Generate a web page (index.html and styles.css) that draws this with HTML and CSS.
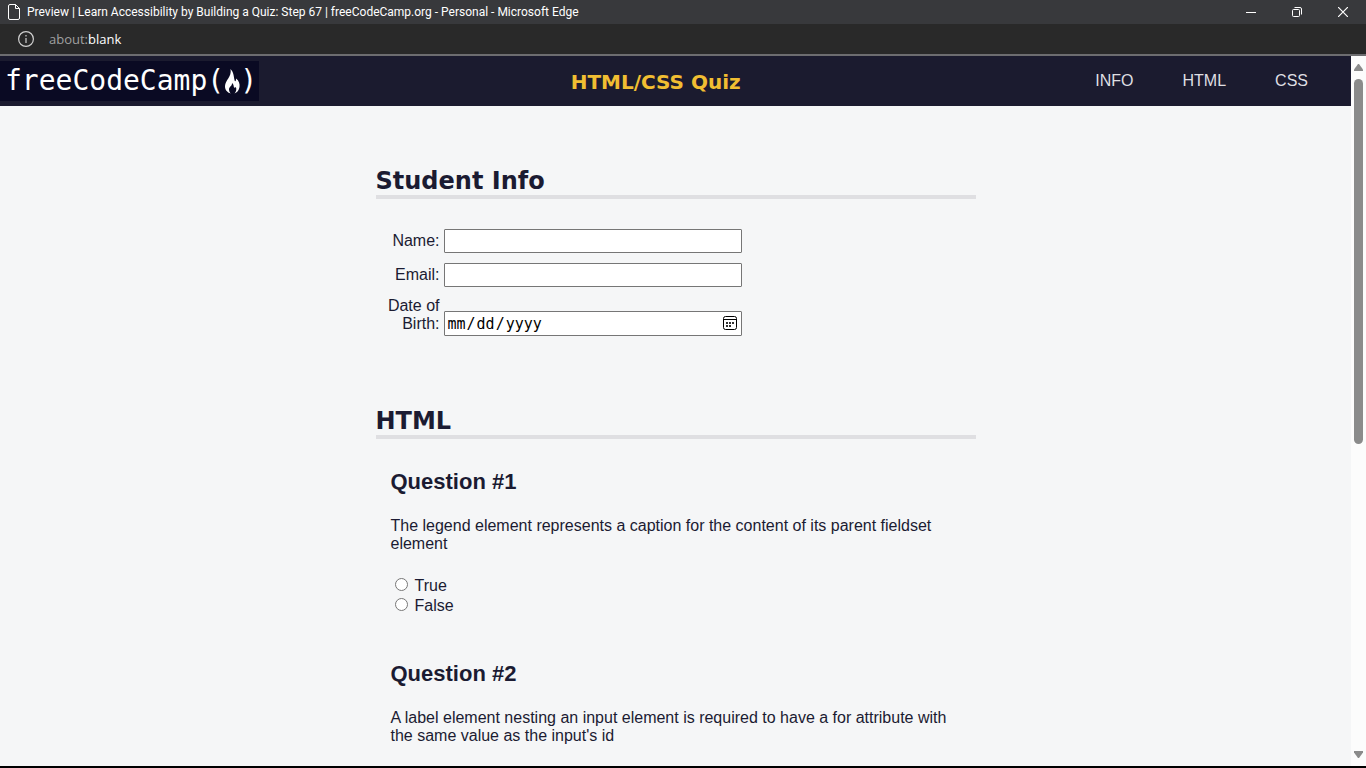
FILE: index.html
```html
<!DOCTYPE html>
<html lang="en">
<head>
<meta charset="UTF-8">
<meta name="viewport" content="width=device-width, initial-scale=1">
<title>Preview | Learn Accessibility by Building a Quiz: Step 67 | freeCodeCamp.org</title>
<link rel="stylesheet" href="styles.css">
</head>
<body>
<div class="titlebar">
  <svg class="doc-icon" width="12" height="16" viewBox="0 0 12 16" fill="none" stroke="#fff"><path d="M2 .5h5.500l4 4V14q0 1.500-1.500 1.500H2Q.5 15.500.5 14V2Q.5.5 2 .5zM7.500.5v4h4"/></svg>
  <span class="window-title">Preview | Learn Accessibility by Building a Quiz: Step 67 | freeCodeCamp.org - Personal - Microsoft Edge</span>
  <div class="window-controls">
    <button type="button" aria-label="Minimize"><svg width="10" height="10" viewBox="0 0 10 10" stroke="#fff"><path d="M0 5.500h10"/></svg></button>
    <button type="button" aria-label="Restore"><svg width="10" height="10" viewBox="0 0 10 10" fill="none" stroke="#fff"><rect x=".5" y="2.500" width="7" height="7" rx="1"/><path d="M2.500.5H8Q9.500.5 9.500 2v5.500"/></svg></button>
    <button type="button" aria-label="Close"><svg width="10" height="10" viewBox="0 0 10 10" stroke="#fff" stroke-width="1.200"><path d="M0 0l10 10M10 0L0 10"/></svg></button>
  </div>
</div>
<div class="addressbar">
  <svg width="16" height="16" viewBox="0 0 16 16" fill="none" stroke="#d0d0d0" stroke-width="1.200"><circle cx="8" cy="8" r="7.400"/><path d="M8 7v5M8 4v1.500"/></svg>
  <span class="address">about:<span class="address-page">blank</span></span>
</div>
<div class="viewport">
  <div class="page">
    <header class="header">
      <div class="logo"><span>freeCodeCamp(</span><svg width="16" height="26" viewBox="0 0 16 26" fill="#fff"><path d="M6.500 1C9.500 4 9.500 7 10.500 12c.3 2 1.800 1.500 1.500-1.500 3 2 4 5.500 3.500 8.500-.5 3.500-2.500 5.500-5 6.500 1.800-2 2.300-4.500 1.300-6.500-.8 1.200-1.800.8-2-.2-.2-1.800-.6-3-1.800-3.800.3 3-3 3.800-3 6.500 0 1.500.7 3 1.800 4C3 24.500.8 21.500 1 18 1.300 12 8 9 6.500 1z"/></svg><span>)</span></div>
      <h1 class="site-title">HTML/CSS Quiz</h1>
      <nav class="nav"><a href="#student-info">INFO</a><a href="#html-questions">HTML</a><a href="#css-questions">CSS</a></nav>
    </header>
    <main>
      <section class="section" id="student-info">
        <h2 class="section-title">Student Info</h2>
        <div class="info">
          <label for="student-name">Name:</label><input type="text" id="student-name">
          <label for="student-email">Email:</label><input type="email" id="student-email">
          <label for="birth-date">Date of Birth:</label>
          <div class="date-field"><input type="date" id="birth-date"><svg class="calendar" width="14" height="14" viewBox="0 0 14 14"><rect x=".5" y=".5" width="13" height="13" rx="2" fill="none" stroke="#000"/><path d="M1 3.500h12" stroke="#000"/><path d="M3 7h8M3 10h5" stroke="#333" stroke-width="2" stroke-dasharray="2 1"/></svg></div>
        </div>
      </section>
      <section class="section" id="html-questions">
        <h2 class="section-title">HTML</h2>
        <article class="question">
          <h3>Question #1</h3>
          <fieldset>
            <legend>The legend element represents a caption for the content of its parent fieldset element</legend>
            <label><input type="radio" name="q1" value="true">True</label>
            <label><input type="radio" name="q1" value="false">False</label>
          </fieldset>
        </article>
        <article class="question">
          <h3>Question #2</h3>
          <fieldset>
            <legend>A label element nesting an input element is required to have a for attribute with the same value as the input's id</legend>
          </fieldset>
        </article>
      </section>
    </main>
  </div>
  <div class="scrollbar" aria-hidden="true">
    <svg width="9" height="7" viewBox="0 0 9 7" fill="#8b8b8b"><path d="M4 0h1l4 5.500V7H0V5.500z"/></svg>
    <div class="track"><div class="thumb"></div></div>
    <svg width="9" height="7" viewBox="0 0 9 7" fill="#8b8b8b"><path d="M4 7h1l4-5.500V0H0v1.500z"/></svg>
  </div>
</div>
</body>
</html>
```
FILE: styles.css
```css
* { box-sizing: border-box; }

body {
  margin: 0;
  height: 100vh;
  display: flex;
  flex-direction: column;
  overflow: hidden;
  background: #000;
  color: #1b1b32;
  font: 16px/18px "Liberation Sans", Arial, sans-serif;
}

svg { display: block; flex: none; }

.titlebar {
  display: flex;
  align-items: center;
  gap: 7px;
  height: 24px;
  padding-left: 8px;
  background: #38393c;
  color: #fff;
}

.window-title {
  flex: 1;
  font: 12px/24px Roboto, "Open Sans", sans-serif;
  white-space: nowrap;
}

.window-controls { display: flex; }

.window-controls button {
  display: grid;
  place-items: center;
  width: 46px;
  height: 24px;
  padding: 0;
  border: 0;
  background: none;
}

.addressbar {
  display: flex;
  align-items: center;
  gap: 15px;
  height: 32px;
  padding-left: 18px;
  border-bottom: 2px solid #6d6d70;
  background: #292929;
}

.address {
  color: #a0a0a0;
  font: 13px/30px "Open Sans", "Noto Sans", sans-serif;
}

.address-page { color: #fff; }

.viewport {
  flex: 1;
  display: flex;
  min-height: 0;
  margin-bottom: 2px;
}

.page {
  flex: 1;
  overflow: hidden;
  background: #f5f6f7;
}

.header {
  display: flex;
  align-items: center;
  justify-content: space-between;
  height: 50px;
  background: #1b1b2f;
}

.logo {
  display: flex;
  align-items: center;
  padding: 0 2px 0 5px;
  background: #0a0a23;
  color: #fff;
  font: 28px/40px "DejaVu Sans Mono", monospace;
}

.site-title {
  margin: 0;
  padding-top: 2px;
  color: #f1be32;
  font: bold 20px/24px "DejaVu Sans", Verdana, sans-serif;
}

.nav {
  display: flex;
  gap: 49px;
  padding: 0 43px;
}

.nav a {
  color: #dfdfe2;
  text-decoration: none;
}

.section {
  width: 80%;
  max-width: 600px;
  margin: 0 auto 10px;
}

.section-title {
  margin: 0;
  padding-top: 62px;
  border-bottom: 4px solid #dfdfe2;
  font: bold 24px/27px "DejaVu Sans", Verdana, sans-serif;
}

.info {
  display: grid;
  grid-template-columns: 55px 298px;
  gap: 10px 4px;
  align-items: end;
  padding: 30px 0 0 9px;
}

.info label {
  padding: 0 0 3px;
  text-align: right;
}

.info input {
  display: block;
  width: 100%;
  height: 24px;
  padding: 1px 2px;
  border: 1px solid #767676;
  border-radius: 1px;
  background: #fff;
  font-size: 16px;
}

.date-field { position: relative; }

.info input[type="date"] {
  height: 25px;
  color: #000;
  font: 15px "DejaVu Sans Mono", monospace;
}

.info input::-webkit-calendar-picker-indicator { opacity: 0; }

.calendar {
  position: absolute;
  top: 5px;
  right: 5px;
  pointer-events: none;
}

.question { padding: 30px 15px 0; }

.question + .question { padding-top: 46px; }

.question h3 {
  margin: 0;
  font-size: 22px;
  line-height: 25px;
}

.question fieldset {
  margin: 0;
  padding: 22px 0 0;
  border: 0;
}

.question legend {
  padding: 23px 0 0;
}

.question label {
  display: flex;
  align-items: center;
  gap: 7px;
  height: 20px;
  padding: 2px 0 0 4px;
}

.question input {
  width: 13px;
  height: 13px;
  margin: 0 0 4px;
}

.scrollbar {
  display: flex;
  flex-direction: column;
  align-items: center;
  gap: 8px;
  width: 15px;
  padding: 8px 0;
  background: #fcfcfc;
}

.track {
  flex: 1;
  width: 9px;
}

.thumb {
  height: 55%;
  border-radius: 5px;
  background: #8b8b8b;
}
```
